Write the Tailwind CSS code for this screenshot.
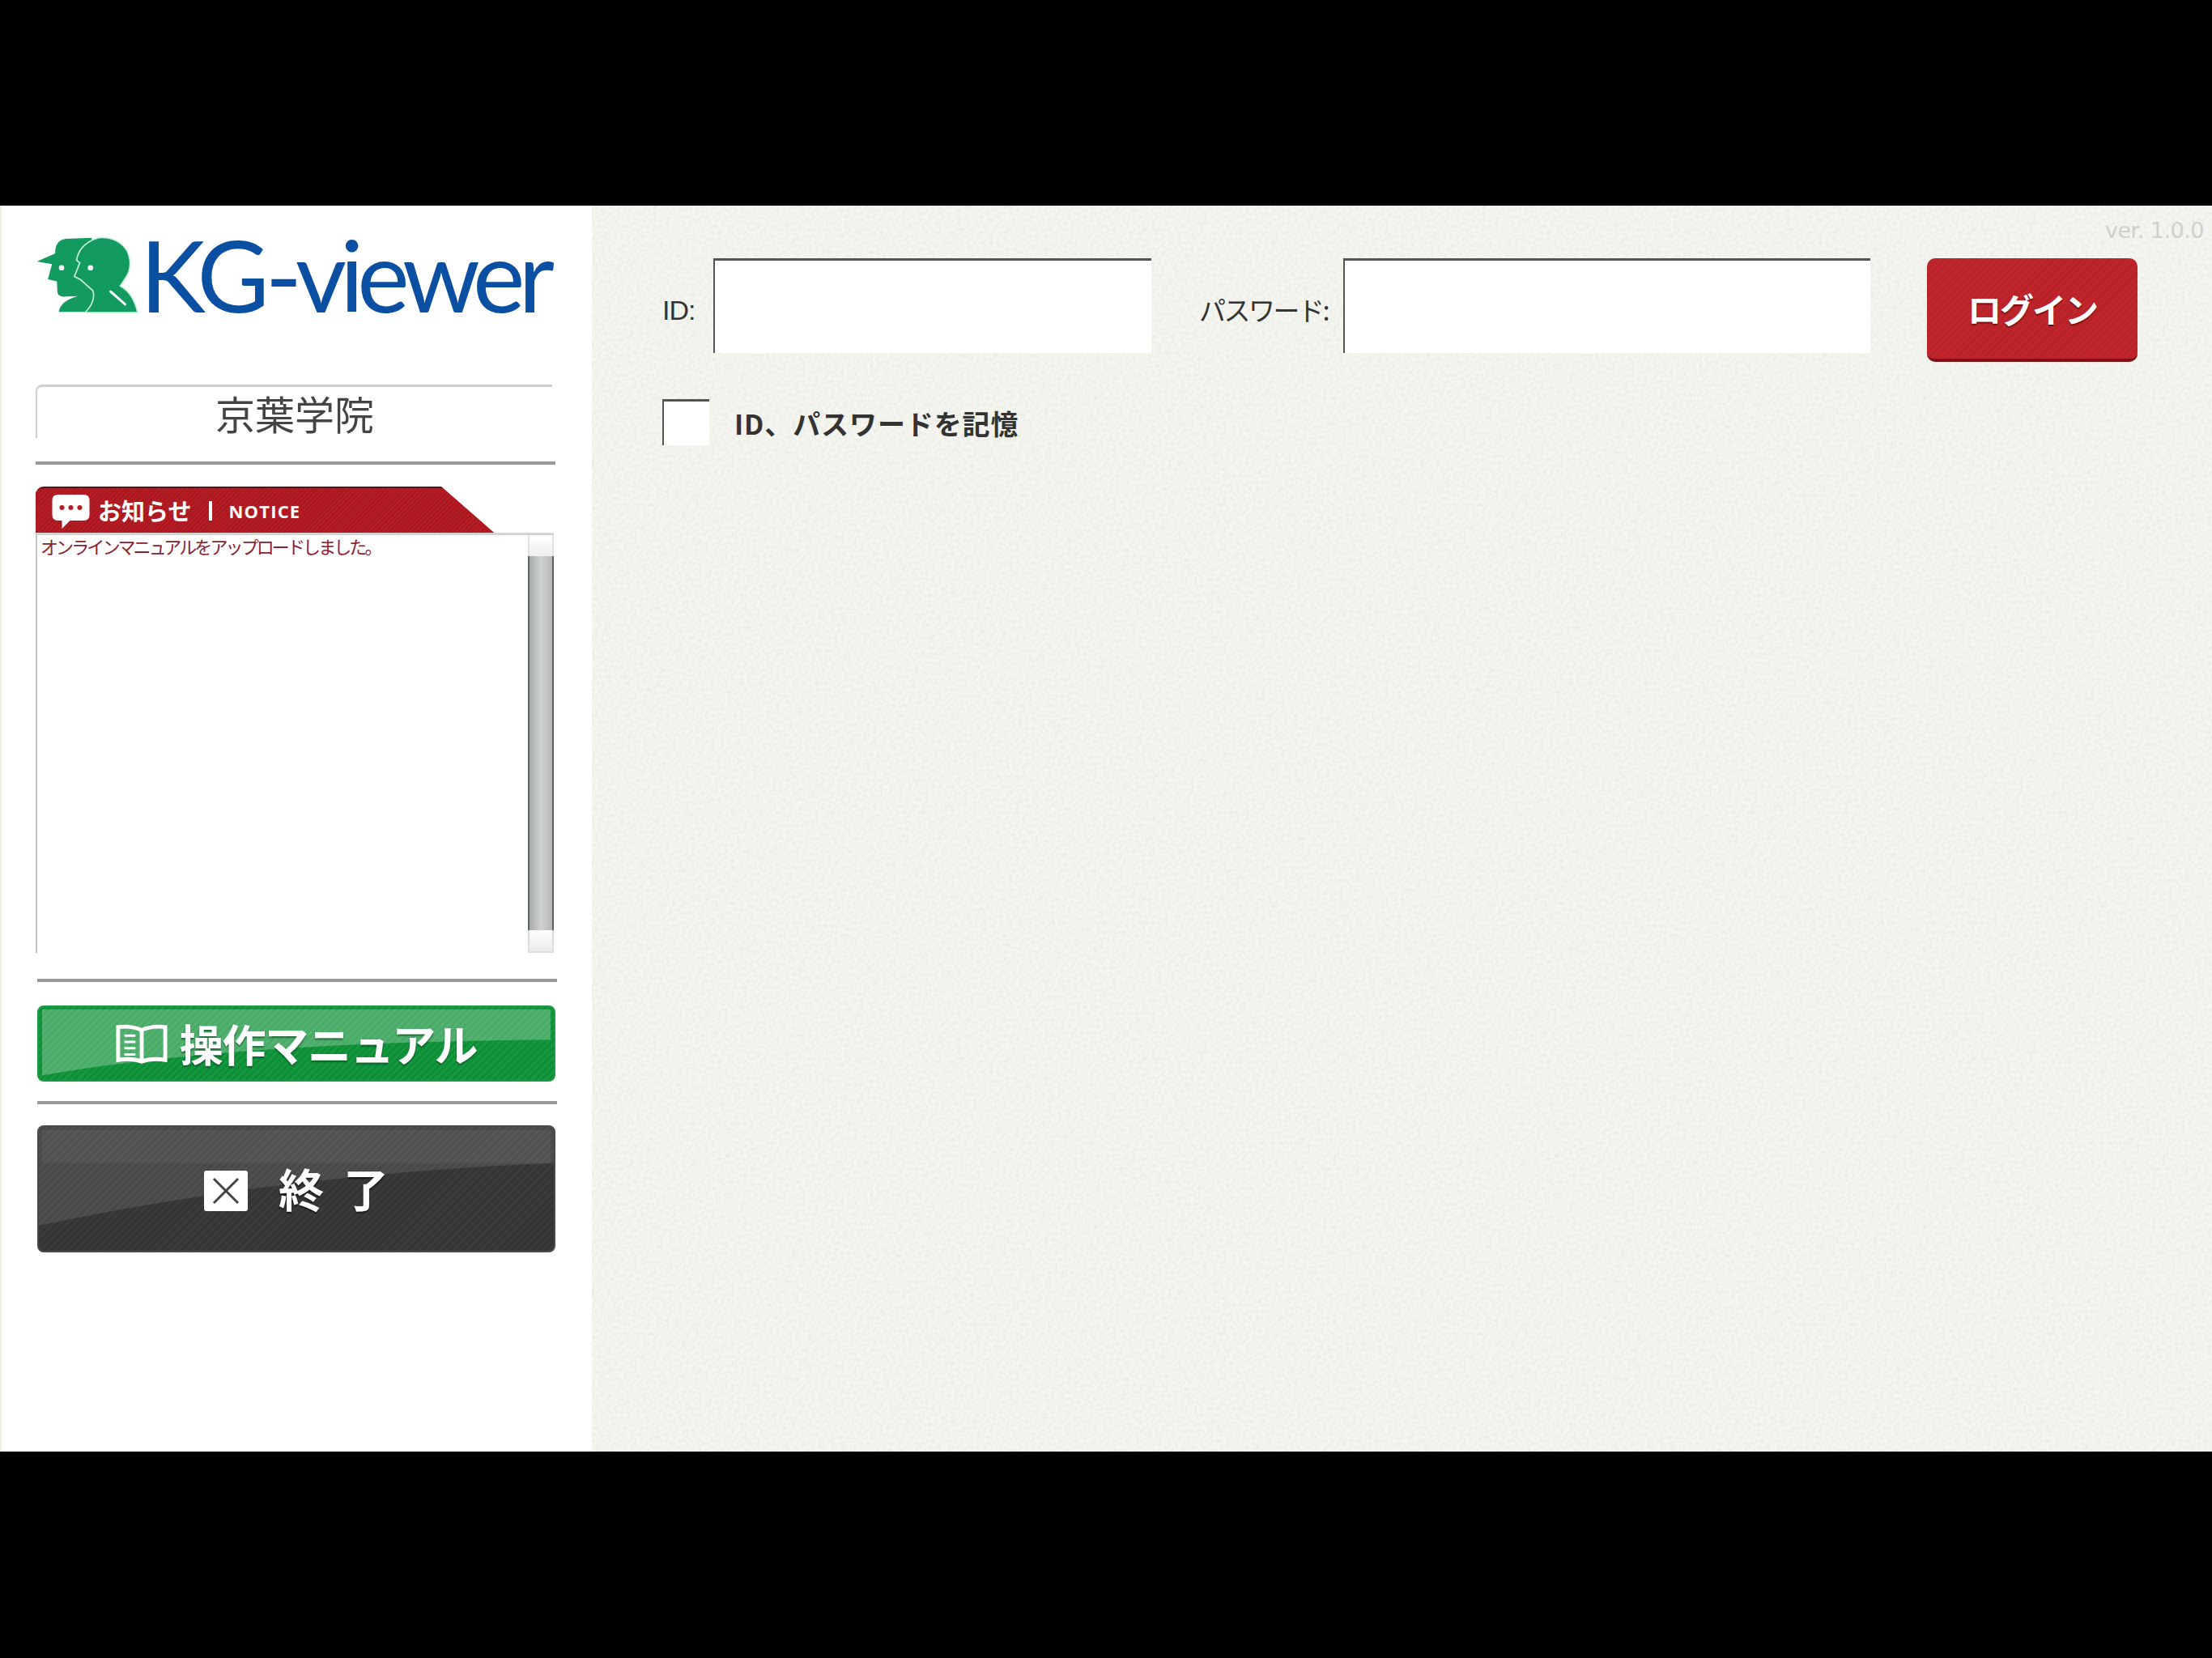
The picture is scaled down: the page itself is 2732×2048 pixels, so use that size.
<!DOCTYPE html>
<html lang="ja">
<head>
    <meta charset="UTF-8">
    <title>KG-viewer</title>
    <script src="https://cdn.jsdelivr.net/npm/@tailwindcss/browser@4"></script>
</head>
<body class="bg-black font-['Noto_Sans_CJK_JP','Noto_Sans',sans-serif]">
    <div class="h-[2048px] w-[2732px] flex flex-col overflow-hidden">
        <div class="h-[254px] bg-black"></div>

        <div class="h-[1539px] flex border-l-2 border-[#eef0e6]">
            <!-- Side panel -->
            <aside class="w-[729px] bg-white pl-[42px] flex flex-col">
                <!-- Logo -->
                <div class="mt-[36px] h-[98px] flex items-center">
                    <svg class="w-[128px] h-[96px] shrink-0" viewBox="40 60 380 285">
                        <path fill="#129a5f" d="M45 155 L112 125 Q110 78 150 72 L245 68 L260 150 L260 300 L225 340 L125 340 Q130 300 195 282 L140 284 Q122 282 120 268 L118 228 L85 220 L100 165 Z"/>
                        <path fill="#129a5f" stroke="#c8f2de" stroke-width="5" d="M270 68 Q340 62 375 115 Q400 170 370 215 L350 245 Q398 270 414 342 L222 342 Q262 300 250 262 L205 222 L182 210 L202 160 L190 150 Q200 90 270 68 Z"/>
                        <circle cx="135" cy="178" r="10" fill="#fff"/>
                        <circle cx="241" cy="178" r="10" fill="#fff"/>
                        <path d="M315 265 L368 312" stroke="#fff" stroke-width="9" stroke-linecap="round"/>
                    </svg>
                    <span class="ml-[1px] text-[#0b4fa3] font-['Lato',sans-serif] font-normal text-[122px] leading-none tracking-[-5px] whitespace-nowrap">KG<span class="tracking-[-8px]">-viewer</span></span>
                </div>

                <!-- School name -->
                <div class="mt-[87px] w-[638px] h-[66px] rounded-tl-lg border-t-[3px] border-l-2 border-[#cfcfcf] flex items-center justify-center text-[49px] leading-none text-[#444]">京葉学院</div>
                <div class="mt-[29px] w-[642px] h-[4px] bg-[#999]"></div>

                <!-- Notice -->
                <div class="mt-[27px] w-[566px] h-[57px] rounded-tl-[10px] border-t-2 border-[#5e0f13] bg-[#b41c24] [clip-path:polygon(0_0,88.5%_0,100%_100%,0_100%)] bg-[repeating-linear-gradient(135deg,#b81d25_0,#b81d25_2px,#a81820_2px,#a81820_4px)] flex items-center pl-[20px] text-white">
                    <svg class="w-[47px] h-[42px] mt-[2px]" viewBox="0 0 46 42">
                        <path fill="#fff" d="M7 0 H39 Q46 0 46 7 V25 Q46 32 39 32 H22 L12 42 V32 H7 Q0 32 0 25 V7 Q0 0 7 0 Z"/>
                        <circle cx="12" cy="16" r="3" fill="#b41c24"/>
                        <circle cx="23" cy="16" r="3" fill="#b41c24"/>
                        <circle cx="34" cy="16" r="3" fill="#b41c24"/>
                    </svg>
                    <span class="ml-[10px] text-[29px] font-bold leading-none">お知らせ</span>
                    <span class="ml-[22px] w-[4px] h-[24px] bg-white"></span>
                    <span class="ml-[20px] text-[22px] font-bold tracking-[1.2px] font-['Open_Sans',sans-serif] leading-none">NOTICE</span>
                </div>
                <div class="w-[640px] h-[519px] border-t-[3px] border-l-2 border-t-[#d4d4d4] border-l-[#c4c4c4] flex">
                    <p class="flex-1 pl-[4px] text-[#8a2232] text-[22px] leading-[26px] tracking-[-2.9px] whitespace-nowrap">オンラインマニュアルをアップロードしました。</p>
                    <div class="w-[32px] flex flex-col">
                        <div class="h-[26px] border-x-2 border-[#e2e2e2] bg-gradient-to-b from-white to-[#eeeeee]"></div>
                        <div class="flex-1 border-x-2 border-[#5e6262] bg-gradient-to-r from-[#a8abab] via-[#cfd1d1] to-[#b5b8b8]"></div>
                        <div class="h-[28px] border-2 border-t-0 border-[#dcdcdc] bg-gradient-to-b from-white to-[#ebebeb]"></div>
                    </div>
                </div>

                <div class="mt-[32px] ml-[2px] w-[642px] h-[4px] bg-[#999]"></div>

                <!-- Manual button -->
                <button class="relative overflow-hidden mt-[29px] ml-[2px] w-[640px] h-[94px] rounded-[8px] border-2 border-[#1c9a45] bg-[repeating-linear-gradient(135deg,#14993f_0,#14993f_3px,#0f8c37_3px,#0f8c37_6px)] flex items-center justify-center text-white">
                    <svg class="absolute inset-0 w-full h-full" viewBox="0 0 640 94" preserveAspectRatio="none">
                        <path fill="#fff" fill-opacity=".26" d="M4 3 H636 V42 Q400 44 220 60 Q90 72 4 88 Z"/>
                    </svg>
                    <svg class="relative w-[64px] h-[50px] mr-[15px]" viewBox="0 0 66 50" fill="none" stroke="#fff" stroke-width="5">
                        <path d="M33 8 Q20 2 3 4 V46 Q20 43 33 48 Q46 43 63 46 V4 Q46 2 33 8 Z M33 8 V48"/>
                        <path d="M11 15 H25 M11 23 H25 M11 31 H25 M11 39 H25" stroke-width="3"/>
                    </svg>
                    <span class="relative text-[54px] font-bold leading-none tracking-[-1.3px] [text-shadow:0_2px_2px_rgba(0,60,20,0.6)]">操作マニュアル</span>
                </button>

                <div class="mt-[24px] ml-[2px] w-[642px] h-[4px] bg-[#999]"></div>

                <!-- Exit button -->
                <button class="relative overflow-hidden mt-[26px] ml-[2px] w-[640px] h-[157px] rounded-[8px] border-2 border-[#4a4a4a] bg-[repeating-linear-gradient(135deg,#3b3b3b_0,#3b3b3b_3px,#343434_3px,#343434_6px)] flex items-center justify-center text-white">
                    <svg class="absolute inset-0 w-full h-full" viewBox="0 0 640 157" preserveAspectRatio="none">
                        <path fill="#fff" fill-opacity=".1" d="M0 0 H640 V46 Q300 60 0 125 Z"/>
                        <path fill="#fff" fill-opacity=".05" d="M4 4 H636 V46 H4 Z"/>
                    </svg>
                    <svg class="relative w-[54px] h-[50px] mr-[38px] mt-[4px]" viewBox="0 0 54 50">
                        <rect width="54" height="50" rx="3" fill="#fff"/>
                        <path d="M12 10 L42 40 M42 10 L12 40" stroke="#444" stroke-width="3"/>
                    </svg>
                    <span class="relative text-[56px] font-bold leading-none tracking-[24px] mr-[-24px] mb-[3px] [text-shadow:0_2px_2px_rgba(0,0,0,0.6)]">終了</span>
                </button>
            </aside>

            <!-- Login area -->
            <main class="relative flex-1 bg-[#f5f6ef] pl-[87px] pt-[65px]">
                <svg class="absolute inset-0 w-full h-full" xmlns="http://www.w3.org/2000/svg">
                    <filter id="paper"><feTurbulence type="fractalNoise" baseFrequency="0.25" numOctaves="3"/><feColorMatrix values="0 0 0 0 0.45  0 0 0 0 0.45  0 0 0 0 0.38  1.2 0 0 0 -0.45"/></filter>
                    <rect width="100%" height="100%" filter="url(#paper)" opacity="0.3"/>
                </svg>
                <span class="absolute right-[10px] top-[17px] text-[27px] leading-none text-[#cfd0cb] font-['DejaVu_Sans',sans-serif] tracking-[-0.5px]">ver. 1.0.0</span>

                <div class="relative flex items-start">
                    <label class="w-[63px] h-[128px] flex items-center text-[34px] text-[#333] tracking-[-1px] font-['Liberation_Sans',sans-serif]">ID:</label>
                    <input type="text" class="w-[541px] h-[117px] bg-white border-t-[3px] border-l-2 border-[#555] outline-none">
                    <label class="ml-[59px] w-[178px] h-[128px] flex items-center text-[33px] text-[#333] tracking-[-2.5px] whitespace-nowrap">パスワード:</label>
                    <input type="password" class="w-[651px] h-[117px] bg-white border-t-[3px] border-l-2 border-[#555] outline-none">
                    <button class="ml-[70px] w-[260px] h-[128px] rounded-[10px] border-b-[4px] border-[#7e1016] bg-[repeating-linear-gradient(135deg,#c0252c_0,#c0252c_3px,#b82329_3px,#b82329_6px)] text-white text-[42px] font-bold leading-none tracking-[-2px] [text-shadow:0_2px_1px_rgba(90,0,0,0.7)]">ログイン</button>
                </div>
                <div class="relative flex items-center mt-[46px]">
                    <input type="checkbox" class="appearance-none w-[58px] h-[57px] bg-white border-t-[3px] border-l-2 border-[#555]">
                    <label class="ml-[31px] mt-[1px] text-[34px] font-bold text-[#333] tracking-[0.9px] whitespace-nowrap">ID、パスワードを記憶</label>
                </div>
            </main>
        </div>

        <div class="flex-1 bg-black"></div>
    </div>
</body>
</html>
